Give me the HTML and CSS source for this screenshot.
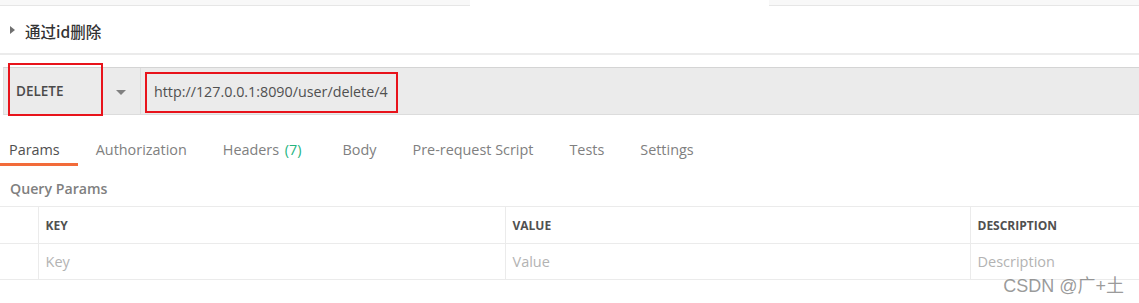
FILE: index.html
```html
<!DOCTYPE html>
<html lang="zh-CN">
<head>
    <meta charset="UTF-8">
    <meta name="viewport" content="width=device-width, initial-scale=1.0">
    <title>通过id删除</title>
    <link rel="stylesheet" href="styles.css">
</head>
<body>
    <div class="top-strip">
        <div class="strip-part left"></div>
        <div class="strip-part right"></div>
    </div>
    <div class="title-row">
        <span class="caret"></span>
        <span class="title">通过id删除</span>
    </div>
    <div class="request-bar">
        <div class="method">
            <span class="method-name">DELETE</span>
            <span class="method-arrow"></span>
            <div class="mark mark-method"></div>
        </div>
        <div class="url">
            <span class="url-text">http://127.0.0.1:8090/user/delete/4</span>
            <div class="mark mark-url"></div>
        </div>
    </div>
    <div class="tabs">
        <span class="tab active">Params</span>
        <span class="tab">Authorization</span>
        <span class="tab with-count">Headers <span class="count">(7)</span></span>
        <span class="tab">Body</span>
        <span class="tab">Pre-request Script</span>
        <span class="tab">Tests</span>
        <span class="tab">Settings</span>
    </div>
    <div class="section-label">Query Params</div>
    <table class="params">
        <colgroup>
            <col class="c-check">
            <col class="c-key">
            <col class="c-value">
            <col class="c-desc">
        </colgroup>
        <tr class="head">
            <td></td>
            <td>KEY</td>
            <td>VALUE</td>
            <td>DESCRIPTION</td>
        </tr>
        <tr class="row">
            <td></td>
            <td class="ph">Key</td>
            <td class="ph">Value</td>
            <td class="ph">Description</td>
        </tr>
    </table>
    <div class="watermark">CSDN @广+土</div>
</body>
</html>
```

FILE: styles.css
```css
body {
    margin: 0;
    font-family: 'Open Sans', 'Noto Sans CJK SC', sans-serif;
    background: #fff;
    color: #505050;
    position: relative;
    height: 303px;
    overflow: hidden;
}
.top-strip {
    display: flex;
    justify-content: space-between;
    height: 6px;
}
.strip-part {
    background: #f8f8f8;
    border-bottom: 1px solid #e6e6e6;
    height: 5px;
}
.strip-part.left {
    width: 470px;
}
.strip-part.right {
    width: 370px;
}
.title-row {
    display: flex;
    align-items: center;
    height: 48px;
    padding-left: 10px;
    border-bottom: 2px solid #ebebeb;
    box-sizing: border-box;
    margin-top: 1px;
}
.caret {
    width: 0;
    height: 0;
    border-top: 4px solid transparent;
    border-bottom: 4px solid transparent;
    border-left: 5px solid #707070;
    margin-right: 10px;
}
.title {
    font-family: 'Noto Sans CJK SC', sans-serif;
    font-size: 15.5px;
    font-weight: 500;
    color: #333;
    margin-top: 2px;
}
.request-bar {
    display: flex;
    height: 48px;
    margin: 12px 0 0 3px;
    background: #ebebeb;
    border-top: 1px solid #d4d4d4;
    border-bottom: 1px solid #dcdcdc;
    border-left: 1px solid #e0e0e0;
    box-sizing: border-box;
}
.method {
    position: relative;
    width: 137px;
    display: flex;
    align-items: center;
    padding-left: 12px;
    box-sizing: border-box;
    border-right: 1px solid #dcdcdc;
}
.method-name {
    font-size: 13.5px;
    font-weight: 600;
    color: #4a4a4a;
}
.method-arrow {
    width: 0;
    height: 0;
    border-left: 5px solid transparent;
    border-right: 5px solid transparent;
    border-top: 5px solid #808080;
    margin: 2px 0 0 53px;
}
.url {
    position: relative;
    display: flex;
    align-items: center;
    padding-left: 13px;
}
.url-text {
    font-size: 14.3px;
    color: #505050;
}
.mark {
    position: absolute;
    border: 2px solid #e8131b;
    box-sizing: border-box;
}
.mark-method {
    left: 4px;
    top: -5px;
    width: 95px;
    height: 53px;
}
.mark-url {
    left: 4px;
    top: 4px;
    width: 253px;
    height: 41px;
}
.tabs {
    display: flex;
    gap: 36px;
    padding-left: 9px;
}
.tab {
    position: relative;
    font-size: 14.4px;
    line-height: 20px;
    color: #808080;
    padding: 25px 0 6px;
}
.tab.with-count {
    margin-right: 5px;
}
.tab.active {
    color: #505050;
}
.tab.active::after {
    content: '';
    position: absolute;
    left: -9px;
    right: -18px;
    bottom: 0;
    height: 3px;
    background: #f26b3a;
}
.count {
    color: #26b47f;
    margin-left: 2px;
}
.section-label {
    font-size: 14.2px;
    font-weight: 600;
    line-height: 20px;
    color: #808080;
    padding-left: 10px;
    margin-top: 13px;
}
.params {
    width: 100%;
    border-collapse: collapse;
    margin-top: 7px;
    table-layout: fixed;
}
.c-check {
    width: 38px;
}
.c-key {
    width: 467px;
}
.c-value {
    width: 465px;
}
.params td {
    border: 1px solid #ebebeb;
    padding: 0 7px;
}
.params td:first-child {
    border-left: none;
}
.params td:last-child {
    border-right: none;
}
.head td {
    height: 36px;
    font-size: 12px;
    font-weight: 700;
    color: #505050;
}
.row td {
    height: 35px;
    font-size: 14.5px;
}
.ph {
    color: #b3b3b3;
}
.watermark {
    position: absolute;
    right: 15px;
    top: 271px;
    font-family: 'Liberation Sans', 'Noto Sans CJK SC', sans-serif;
    font-size: 18px;
    color: rgba(110, 110, 110, 0.7);
}
```
